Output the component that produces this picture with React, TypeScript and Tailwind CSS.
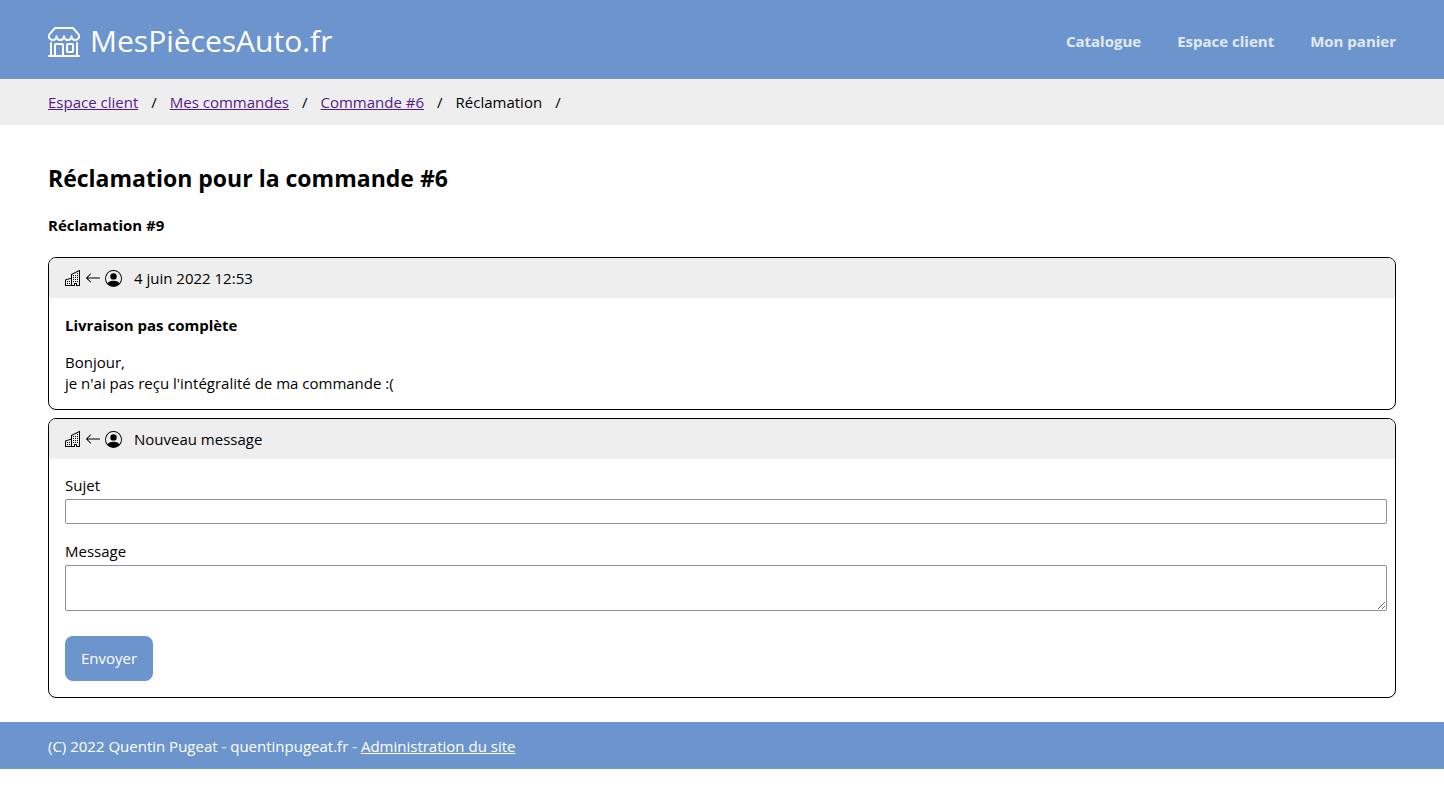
import React from "react";
import {
  BsArrowLeft,
  BsBuildings,
  BsPersonCircle,
  BsShop,
} from "react-icons/bs";

const breadcrumbs = ["Espace client", "Mes commandes", "Commande #6"];

const Header = () => {
  return (
    <header className="flex items-center justify-between bg-[#6c95cd] px-12 pt-[21px] pb-[18px] text-white">
      <a href="#" className="flex items-center gap-[10px] text-[30px] leading-10">
        <BsShop className="size-8" aria-hidden="true" />
        MesPiècesAuto.fr
      </a>
      <nav className="flex gap-9 font-bold text-white/80">
        <a href="#catalogue">Catalogue</a>
        <a href="#client">Espace client</a>
        <a href="#panier">Mon panier</a>
      </nav>
    </header>
  );
};

const Breadcrumb = () => {
  return (
    <nav className="bg-[#eeeeee] px-12 py-3" aria-label="Fil d'Ariane">
      <ol className="flex gap-[13px] leading-[22px]">
        {breadcrumbs.map((label) => (
          <li key={label} className="flex gap-[13px]">
            <a href="#" className="text-[#551a8b] underline">
              {label}
            </a>
            <span>/</span>
          </li>
        ))}
        <li className="flex gap-[13px]">
          <span>Réclamation</span>
          <span>/</span>
        </li>
      </ol>
    </nav>
  );
};

const Card = ({
  title,
  children,
}: {
  title: string;
  children: React.ReactNode;
}) => {
  return (
    <section className="overflow-hidden rounded-lg border border-black">
      <div className="flex h-10 items-center bg-[#eeeeee] px-4">
        <div className="mr-3 flex items-center gap-1">
          <BsBuildings className="size-4" />
          <BsArrowLeft className="size-4" />
          <BsPersonCircle className="size-[17px]" />
        </div>
        {title}
      </div>
      {children}
    </section>
  );
};

const App = () => {
  return (
    <div className="font-['Open_Sans',sans-serif] text-[15px] leading-[21px] text-black">
      <Header />
      <Breadcrumb />
      <main className="px-12 pt-[37px] pb-6">
        <h1 className="text-[23px] leading-8 font-bold">
          Réclamation pour la commande #6
        </h1>
        <h2 className="my-[21px] font-bold">Réclamation #9</h2>
        <div className="flex flex-col gap-2">
          <Card title="4 juin 2022 12:53">
            <div className="px-4 pt-4 pb-[15px]">
              <h3 className="mb-4 leading-[22px] font-bold">
                Livraison pas complète
              </h3>
              <p>
                Bonjour,
                <br />
                je n'ai pas reçu l'intégralité de ma commande :(
              </p>
            </div>
          </Card>
          <Card title="Nouveau message">
            <form className="py-4 pr-2 pl-4">
              <label htmlFor="sujet" className="mb-[3px] block">
                Sujet
              </label>
              <input
                id="sujet"
                type="text"
                className="mb-[17px] block h-[25px] w-full rounded-xs border border-[#8f8f9d] bg-white px-1"
              />
              <label htmlFor="message" className="mb-[3px] block">
                Message
              </label>
              <textarea
                id="message"
                rows={2}
                className="mb-[25px] block h-[46px] w-full rounded-xs border border-[#8f8f9d] bg-white px-1"
              />
              <button
                type="submit"
                className="h-[45px] rounded-lg bg-[#6c95cd] px-4 text-white"
              >
                Envoyer
              </button>
            </form>
          </Card>
        </div>
      </main>
      <footer className="bg-[#6c95cd] px-12 pt-[14px] pb-3 text-white">
        (C) 2022 Quentin Pugeat - quentinpugeat.fr -{" "}
        <a href="#admin" className="underline">
          Administration du site
        </a>
      </footer>
    </div>
  );
};

export default App;
